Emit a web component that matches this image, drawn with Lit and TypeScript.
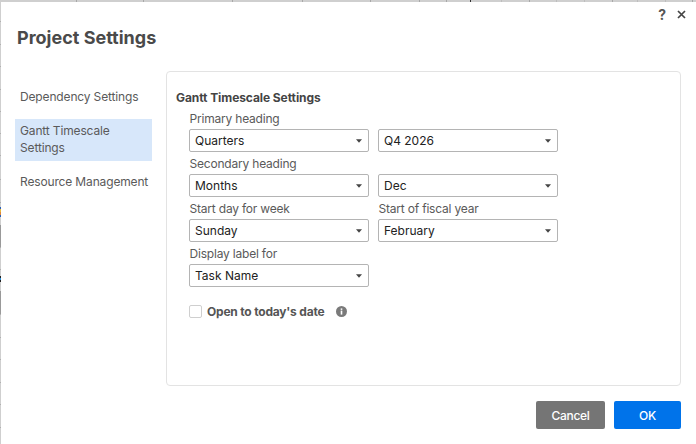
import { LitElement, html, css, unsafeCSS } from "lit";
import { customElement } from "lit/decorators.js";

const caret = html`<svg class="caret" width="6" height="4" viewBox="0 0 6 4"><path d="M0 0.2H6L3 3.8Z" fill="#444"></path></svg>`;

const rect = (c: string, x: number, y: number, w: number, h: number) =>
  `linear-gradient(${c},${c}) ${x}px ${y}px/${w}px ${h}px no-repeat`;

const backdrop = [
  ...[76, 143, 232, 302, 370, 419, 446, 529, 612, 692].map((x) => rect("#a8a8a8", x, 0, 1, 2)),
  ...[501, 556, 584, 637, 665].map((x) => rect("#bdbdbd", x, 0, 1, 2)),
  rect("#333", 470, 0, 1, 2),
  ...[21, 44, 66, 89, 111, 133, 155, 179, 202, 247, 269, 314, 337, 359, 382, 404, 427].map((y) =>
    rect("#b0b0b0", 0, y, 1, 1),
  ),
  rect("#2a5fb8", 0, 207, 1, 2),
  rect("#e8b93a", 0, 209, 1, 3),
  rect("#e0873a", 0, 212, 1, 3),
  rect("#2a5fb8", 0, 215, 1, 2),
  rect("#999", 0, 225, 1, 22),
  rect("#222", 0, 276, 1, 2),
  rect("#2a8fd8", 0, 278, 1, 2),
  rect("#222", 0, 280, 1, 2),
  rect("#999", 0, 291, 1, 23),
  "#cfcfcf",
].join(",");

@customElement("app-root")
export class AppRoot extends LitElement {
  static styles = css`
    :host {
      display: block;
      width: 696px;
      height: 444px;
      background: ${unsafeCSS(backdrop)};
      font-family: Inter, "Liberation Sans", sans-serif;
      overflow: hidden;
    }
    .dialog {
      box-sizing: border-box;
      margin: 2px 0 0 1px;
      width: 695px;
      height: 442px;
      background: #fff;
      padding: 0 15px 15px 14px;
      display: flex;
      flex-direction: column;
    }
    .top {
      box-sizing: border-box;
      height: 20px;
      display: flex;
      justify-content: flex-end;
      align-items: center;
      gap: 11px;
      padding: 4px 0 0;
      margin-right: -5px;
      color: #555;
      font-size: 14px;
      font-weight: 700;
      flex: none;
    }
    .top svg { display: block; }
    h1 {
      margin: 4px 0 0 2px;
      height: 23px;
      flex: none;
      font-size: 18px;
      line-height: 23px;
      font-weight: 700;
      color: #4a4a4a;
    }
    .main {
      display: flex;
      margin-top: 22px;
      height: 315px;
      flex: none;
    }
    nav {
      width: 137px;
      margin-right: 14px;
      padding-top: 14px;
      flex: none;
    }
    .nav-item {
      padding: 3px 0 5px 5px;
      font-size: 12px;
      line-height: 17px;
      letter-spacing: -0.15px;
      color: #5a5a5a;
      margin-bottom: 9px;
    }
    .nav-item.on { background: #d7e7fa; padding-right: 5px; }
    .panel {
      box-sizing: border-box;
      flex: 1;
      border: 1px solid #e3e3e3;
      border-radius: 4px;
      padding: 18px 9px 0;
    }
    h2 {
      margin: 0;
      font-size: 12px;
      line-height: 16px;
      font-weight: 700;
      letter-spacing: -0.08px;
      color: #444;
    }
    .grid {
      display: grid;
      grid-template-columns: 180px 180px;
      column-gap: 9px;
      margin: 0 0 0 13px;
      padding-top: 1px;
    }
    .field { display: flex; flex-direction: column; }
    label {
      display: block;
      height: 22px;
      line-height: 24px;
      font-size: 12px;
      letter-spacing: -0.2px;
      padding-left: 0.5px;
      color: #5a5a5a;
    }
    .select {
      box-sizing: border-box;
      height: 23px;
      border: 1px solid #b4b4b4;
      border-radius: 2px;
      display: flex;
      align-items: center;
      justify-content: space-between;
      padding: 0 6px 0 5px;
      font-size: 12px;
      color: #222;
    }
    .caret { display: block; }
    .check {
      display: flex;
      align-items: center;
      margin: 17px 0 0 13px;
      height: 15px;
      font-size: 12px;
      font-weight: 700;
      letter-spacing: -0.2px;
      color: #555;
    }
    .box {
      box-sizing: border-box;
      width: 13px;
      height: 13px;
      border: 1px solid #cfcfcf;
      border-radius: 2px;
      margin-right: 5px;
    }
    .info { margin-left: 12px; display: block; }
    .foot {
      display: flex;
      justify-content: flex-end;
      gap: 9px;
      margin-top: 15px;
    }
    button {
      height: 28px;
      border: 0;
      border-radius: 2px;
      color: #fff;
      font: 500 12px Inter, "Liberation Sans", sans-serif;
      letter-spacing: -0.3px;
      padding: 0;
    }
    .cancel { width: 69px; background: #757575; }
    .ok { width: 67px; background: #0073ea; }
  `;

  private field(label: string, value: string) {
    return html`<div class="field">
      <label>${label}</label>
      <div class="select"><span>${value}</span>${caret}</div>
    </div>`;
  }

  render() {
    return html`<div class="dialog">
      <div class="top">
        <span>?</span>
        <svg width="9" height="9" viewBox="0 0 9 9"><path d="M1 1L8 8M8 1L1 8" stroke="#444" stroke-width="1.7" fill="none"></path></svg>
      </div>
      <h1>Project Settings</h1>
      <div class="main">
        <nav>
          <div class="nav-item">Dependency Settings</div>
          <div class="nav-item on">Gantt Timescale Settings</div>
          <div class="nav-item">Resource Management</div>
        </nav>
        <section class="panel">
          <h2>Gantt Timescale Settings</h2>
          <div class="grid">
            ${this.field("Primary heading", "Quarters")}
            ${this.field("\u00a0", "Q4 2026")}
            ${this.field("Secondary heading", "Months")}
            ${this.field("\u00a0", "Dec")}
            ${this.field("Start day for week", "Sunday")}
            ${this.field("Start of fiscal year", "February")}
            ${this.field("Display label for", "Task Name")}
          </div>
          <div class="check">
            <span class="box"></span>
            <span>Open to today's date</span>
            <svg class="info" width="11" height="11" viewBox="0 0 11 11">
              <circle cx="5.5" cy="5.5" r="5.5" fill="#7a7a7a"></circle>
              <rect x="4.7" y="4.6" width="1.6" height="4" fill="#fff"></rect>
              <rect x="4.7" y="2.4" width="1.6" height="1.5" fill="#fff"></rect>
            </svg>
          </div>
        </section>
      </div>
      <div class="foot">
        <button class="cancel">Cancel</button>
        <button class="ok">OK</button>
      </div>
    </div>`;
  }
}
